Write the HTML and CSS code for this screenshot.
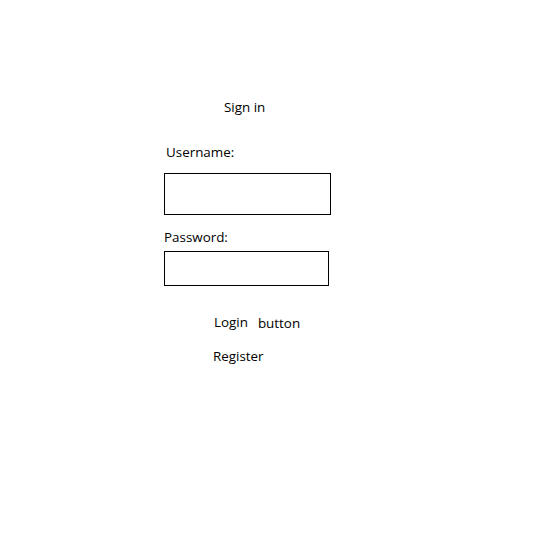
FILE: index.html
```html
<!DOCTYPE html>
<html>
<head>
<meta charset="utf-8">
<link rel="stylesheet" href="styles.css">
</head>
<body>
<div class="form">
  <div class="title">Sign in</div>
  <div class="label label-user">Username:</div>
  <div class="field field-user"></div>
  <div class="label label-pass">Password:</div>
  <div class="field field-pass"></div>
  <div class="actions">
    <span class="login">Login</span>
    <span class="button">button</span>
  </div>
  <div class="register">Register</div>
</div>
</body>
</html>
```
FILE: styles.css
```css
html, body {
  margin: 0;
  padding: 0;
  background: #ffffff;
}
body {
  width: 554px;
  height: 535px;
  font-family: "Open Sans", "Noto Sans", sans-serif;
  font-size: 13.4px;
  line-height: 20px;
  color: #000;
}
.form {
  padding-top: 97px;
  padding-left: 164px;
}
.title {
  margin-left: 60px;
}
.label-user {
  margin-top: 25px;
  margin-left: 2px;
}
.field {
  box-sizing: border-box;
  border: 1px solid #000;
}
.field-user {
  margin-top: 11px;
  width: 167px;
  height: 42px;
}
.label-pass {
  margin-top: 12px;
}
.field-pass {
  margin-top: 4px;
  width: 165px;
  height: 35px;
}
.actions {
  margin-top: 26px;
  margin-left: 50px;
  display: flex;
  align-items: flex-start;
}
.button {
  margin-left: 10px;
  position: relative;
  top: 1px;
}
.register {
  margin-top: 14px;
  margin-left: 49px;
}
```
